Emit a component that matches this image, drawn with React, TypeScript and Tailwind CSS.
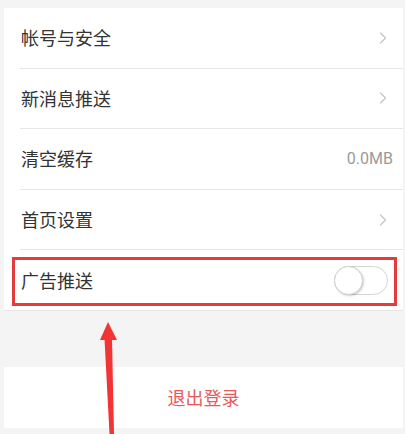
import { ChevronRight } from "lucide-react";

const rows = [
  { label: "帐号与安全", kind: "chevron" },
  { label: "新消息推送", kind: "chevron" },
  { label: "清空缓存", kind: "value", value: "0.0MB" },
  { label: "首页设置", kind: "chevron" },
];

function Toggle() {
  return (
    <div className="relative h-[29px] w-[54px] rounded-full border border-[#d4d4d4] bg-white">
      <div className="absolute left-[-1px] top-[-1px] h-[29px] w-[29px] rounded-full border border-[#cfcfcf] bg-white shadow-[1px_1px_2px_rgba(0,0,0,0.18)]" />
    </div>
  );
}

export default function App() {
  return (
    <div
      className="relative h-[434px] w-[405px] overflow-hidden bg-[#f4f4f4]"
      style={{ fontFamily: '"Noto Sans CJK SC", "Noto Sans", sans-serif' }}
    >
      <div className="h-2" />
      <div className="ml-[4px] mr-[2px] bg-white">
        {rows.map((r) => (
          <div key={r.label} className="ml-[16px] flex h-[60.6px] items-center justify-between border-b border-[#e6e6e6] pr-[10px]">
            <span className="ml-[1px] text-[18px] text-[#333]">{r.label}</span>
            {r.kind === "chevron" ? (
              <ChevronRight className="h-[20px] w-[20px] text-[#c4c4c4]" strokeWidth={1.4} />
            ) : (
              <span className="font-['Roboto'] text-[16px] text-[#9a9a9a]">{r.value}</span>
            )}
          </div>
        ))}
        <div className="flex h-[60.6px] items-center justify-between border-b border-[#e6e6e6] pl-[17px] pr-[15px]">
          <span className="text-[18px] text-[#333]">广告推送</span>
          <Toggle />
        </div>
      </div>
      <div className="h-[56px]" />
      <div className="ml-[4px] mr-[2px] flex h-[61px] items-center justify-center bg-white">
        <span className="text-[18px] text-[#e85a5a]">退出登录</span>
      </div>

      {/* annotation box */}
      <div className="absolute left-[12px] top-[257px] h-[49px] w-[385px] border-[3px] border-[#e53b3b]" />
      {/* annotation arrow */}
      <svg className="absolute left-0 top-0" width="405" height="434" viewBox="0 0 405 434">
        <polygon points="108,322 100,340 117,340" fill="#f23434" />
        <polygon points="104.5,339 112,339 114,434 109.5,434" fill="#f23434" />
      </svg>
    </div>
  );
}
